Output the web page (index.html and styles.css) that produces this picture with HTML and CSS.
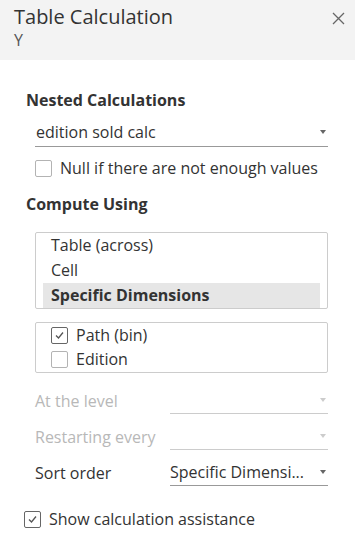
FILE: index.html
```html
<!DOCTYPE html>
<html lang="en">
<head>
    <meta charset="UTF-8">
    <meta name="viewport" content="width=device-width, initial-scale=1.0">
    <title>Table Calculation</title>
    <link rel="stylesheet" href="styles.css">
</head>
<body>
    <div class="painel">
        <div class="cabecalho">
            <div class="titulo">Table Calculation</div>
            <div class="subtitulo">Y</div>
            <span class="fechar">
                <svg width="13" height="13" viewBox="0 0 13 13"><path d="M1 1L12 12M12 1L1 12" stroke="#666" stroke-width="1.3"/></svg>
            </span>
        </div>

        <div class="conteudo">
            <div class="secao">Nested Calculations</div>
            <div class="dropdown dropdown-largo">
                <span>edition sold calc</span>
                <span class="seta"></span>
            </div>
            <label class="check linha-null">
                <span class="caixa"></span>
                Null if there are not enough values
            </label>

            <div class="secao secao-compute">Compute Using</div>
            <div class="lista">
                <div class="item">Table (across)</div>
                <div class="item">Cell</div>
                <div class="item selecionado">Specific Dimensions</div>
            </div>

            <div class="lista lista-dimensoes">
                <label class="check item">
                    <span class="caixa marcada"><svg width="11" height="11" viewBox="0 0 11 11"><path d="M2 5.5L4.5 8L9 2.5" fill="none" stroke="#555" stroke-width="1.3"/></svg></span>
                    Path (bin)
                </label>
                <label class="check item">
                    <span class="caixa"></span>
                    Edition
                </label>
            </div>

            <div class="campo campo-primeiro desativado">
                <span class="rotulo">At the level</span>
                <div class="dropdown"><span></span><span class="seta"></span></div>
            </div>
            <div class="campo desativado">
                <span class="rotulo">Restarting every</span>
                <div class="dropdown"><span></span><span class="seta"></span></div>
            </div>
            <div class="campo">
                <span class="rotulo">Sort order</span>
                <div class="dropdown"><span>Specific Dimensi...</span><span class="seta"></span></div>
            </div>
        </div>

        <label class="check assistencia">
            <span class="caixa marcada"><svg width="11" height="11" viewBox="0 0 11 11"><path d="M2 5.5L4.5 8L9 2.5" fill="none" stroke="#555" stroke-width="1.3"/></svg></span>
            Show calculation assistance
        </label>
    </div>
</body>
</html>
```

FILE: styles.css
```css
body {
    margin: 0;
    font-family: "Open Sans", "Liberation Sans", sans-serif;
    color: #333;
    background-color: white;
}
.painel {
    width: 355px;
    height: 553px;
}
.cabecalho {
    position: relative;
    background-color: #f3f3f3;
    height: 60px;
    box-sizing: border-box;
    padding: 4px 14px 0;
}
.titulo {
    font-size: 20px;
    line-height: 26px;
    color: #333;
}
.subtitulo {
    font-size: 16px;
    line-height: 20px;
    color: #555;
}
.fechar {
    position: absolute;
    right: 10px;
    top: 8px;
}
.conteudo {
    padding: 30px 27px 0 35px;
}
.secao {
    font-weight: bold;
    font-size: 16px;
    line-height: 20px;
    margin-left: -9px;
    margin-bottom: 8px;
}
.secao-compute {
    margin-top: 16px;
    margin-bottom: 18px;
}
.dropdown {
    display: flex;
    align-items: center;
    justify-content: space-between;
    border-bottom: 1px solid #999;
    height: 26px;
    font-size: 16px;
}
.dropdown-largo {
    height: 28px;
    margin-top: 8px;
}
.dropdown-largo span:first-child {
    padding-left: 1px;
}
.seta {
    width: 0;
    height: 0;
    border-left: 3px solid transparent;
    border-right: 3px solid transparent;
    border-top: 4px solid #666;
    margin-right: 2px;
}
.check {
    display: flex;
    align-items: center;
    gap: 8px;
    font-size: 16px;
}
.caixa {
    width: 15px;
    height: 15px;
    border: 1px solid #b3b3b3;
    border-radius: 2px;
    display: flex;
    align-items: center;
    justify-content: center;
}
.caixa.marcada {
    border-color: #666;
}
.linha-null {
    margin-top: 11px;
    line-height: 20px;
}
.lista {
    border: 1px solid #ccc;
    border-radius: 2px;
    padding: 0 7px;
    font-size: 16px;
}
.item {
    height: 25px;
    line-height: 25px;
    padding-left: 8px;
}
.selecionado {
    background-color: #e6e6e6;
    font-weight: bold;
}
.lista-dimensoes {
    margin-top: 13px;
    padding-bottom: 1px;
}
.lista-dimensoes .item {
    height: 24px;
}
.campo {
    display: grid;
    grid-template-columns: 135px 1fr;
    align-items: end;
    font-size: 16px;
    margin-top: 9px;
}
.campo-primeiro {
    margin-top: 14px;
}
.campo .rotulo {
    line-height: 26px;
}
.desativado {
    color: #b8b8b8;
}
.desativado .dropdown {
    border-bottom-color: #ccc;
}
.desativado .seta {
    border-top-color: #ccc;
}
.assistencia {
    margin: 23px 0 0 24px;
    line-height: 20px;
}
```
